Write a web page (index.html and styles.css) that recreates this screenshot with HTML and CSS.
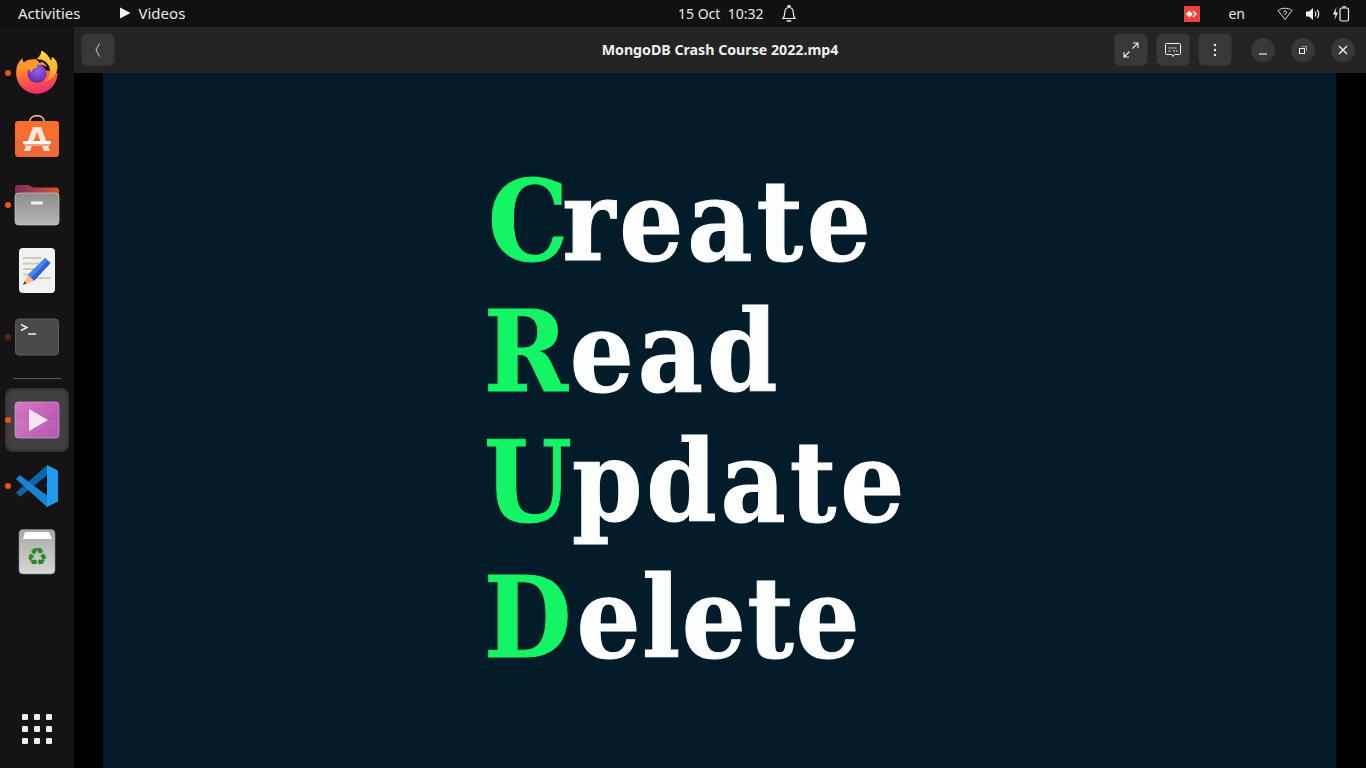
FILE: index.html
```html
<!DOCTYPE html>
<html lang="en">
<head>
    <meta charset="UTF-8">
    <meta name="viewport" content="width=device-width, initial-scale=1.0">
    <title>MongoDB Crash Course 2022.mp4</title>
    <link rel="stylesheet" href="styles.css">
</head>
<body>
    <header class="topbar">
        <div class="topbar-left">
            <span class="activities">Activities</span>
            <span class="app-menu">
                <svg class="app-menu-icon" viewBox="0 0 12 12"><path d="M1 0.5L11.5 6L1 11.5Z" fill="#f4f4f4"/></svg>
                Videos
            </span>
        </div>
        <div class="clock">
            <span>15 Oct&nbsp; 10:32</span>
            <svg class="bell" viewBox="0 0 16 18" fill="none" stroke="#eee" stroke-width="1.2">
                <path d="M2 13.5c1.5-1.5 1.6-3 1.7-5.5C3.8 4.5 5.5 2.5 8 2.5s4.200 2 4.300 5.500c.1 2.500.2 4 1.700 5.500Z"/>
                <path d="M7 2V1h2v1M5.800 16h4.400" stroke-width="1.500"/>
            </svg>
        </div>
        <div class="tray">
            <span class="tray-badge">
                <svg viewBox="0 0 16 16" width="12" height="12"><path d="M4.500 3.500L9 8l-4.500 4.500L0 8Z" fill="#fff"/><path d="M10 3.500L14.500 8 10 12.500 8.800 11.300 12 8 8.800 4.700Z" fill="#fff"/></svg>
            </span>
            <span class="lang">en</span>
            <svg class="wifi" viewBox="0 0 16 14" fill="none" stroke="#ddd" stroke-width="1"><path d="M1 3.500C5 .5 11 .5 15 3.500L8 12.500Z"/><path d="M6.500 5.500c0-2 3-2 3-.2 0 1.200-1.500 1.200-1.500 2.700" stroke="#fff"/></svg>
            <svg class="volume" viewBox="0 0 16 14"><path d="M1 4.500h3L8 1v12L4 9.500H1Z" fill="#f2f2f2"/><path d="M10 4.500c1 1.500 1 3.500 0 5M12.200 2.800c1.800 2.500 1.800 6 0 8.400" fill="none" stroke="#eee" stroke-width="1.200"/></svg>
            <svg class="battery" viewBox="0 0 18 16" fill="none"><path d="M4.500 1L1 8.500h2.500L2.500 14 6 6.500H3.500Z" fill="#f2f2f2"/><rect x="8" y="2" width="8.500" height="13" rx="1.800" stroke="#f2f2f2" stroke-width="1.200"/><path d="M10.500 .8h3.500" stroke="#f2f2f2" stroke-width="1.200"/></svg>
        </div>
    </header>

    <div class="desktop">
        <nav class="dock">
            <div class="dock-item">
                <i class="run-dot"></i>
                <svg class="dock-icon" viewBox="0 0 44 44">
                    <defs>
                        <linearGradient id="ffBody" x1="0.3" y1="0.2" x2="0.5" y2="1">
                            <stop offset="0" stop-color="#ff9a26"/>
                            <stop offset="0.5" stop-color="#ff5a3c"/>
                            <stop offset="1" stop-color="#f02a78"/>
                        </linearGradient>
                        <linearGradient id="ffFlame" x1="0.5" y1="0" x2="0.5" y2="1">
                            <stop offset="0" stop-color="#ffdc3c"/>
                            <stop offset="1" stop-color="#ff9628"/>
                        </linearGradient>
                        <radialGradient id="ffGlobe" cx="0.55" cy="0.35" r="0.65">
                            <stop offset="0" stop-color="#9a5cf0"/>
                            <stop offset="1" stop-color="#5a2eb0"/>
                        </radialGradient>
                    </defs>
                    <path d="M1.200 23c0-6 1.800-11 6.300-15 0 2 .4 3.500 1.500 5 1.500-2 3.500-3.200 6-3.500 1.800-.2 4-.2 5.500-.5l1.500 1 8 10L42.500 23c0 11.500-9.300 20.800-20.700 20.800S1.200 34.500 1.200 23Z" fill="url(#ffBody)"/>
                    <path d="M26.500 .5c-.5 3.500-1.500 6-5 8.800 6-.5 11 2.500 13 8 1.500 5-.5 11-5 14.500 8-2 13-8 13-15 0-4-1.500-7.500-5.800-10.100.3 1.800 0 3-.7 4C34.500 6.500 31 3 26.500 .5Z" fill="url(#ffFlame)"/>
                    <circle cx="22" cy="23.500" r="9.500" fill="url(#ffGlobe)"/>
                    <path d="M6 14c3-2.500 6.500-3 10-1.500 3.500 1.500 8 1 11-.5 2 1 4 2.500 5 5-3-2-7-3-10-2 .5 1 .5 1.800 0 2.500-3 .5-5 2.500-6 5-1.500-3-5-6-10-8.500Z" fill="#ff9a2a"/>
                </svg>
            </div>
            <div class="dock-item">
                <svg class="dock-icon" viewBox="0 0 44 44" fill="none">
                    <path d="M15 8V5c0-7 14-7 14 0v3" stroke="#f3d3ae" stroke-width="1.500"/>
                    <rect y="5" width="44" height="36" rx="3.500" fill="#ec6a35"/>
                    <path d="M0 8.500C0 6.500 1.500 5 3.500 5h37C42.500 5 44 6.500 44 8.500V23H0Z" fill="#f6702e"/>
                    <path fill-rule="evenodd" d="M18 11h8l9 24h-6l-7-19-7 19H9Z" fill="#fbe4d8"/>
                    <rect x="8" y="25" width="28" height="3" rx="1" fill="#fff"/>
                    <rect x="9" y="28" width="26" height="2" fill="#f6a27c"/>
                </svg>
            </div>
            <div class="dock-item">
                <i class="run-dot"></i>
                <svg class="dock-icon" viewBox="0 0 44 44">
                    <defs>
                        <linearGradient id="folderBack" x1="0" y1="0" x2="1" y2="0">
                            <stop offset="0" stop-color="#7c2a63"/>
                            <stop offset="1" stop-color="#d8562a"/>
                        </linearGradient>
                        <linearGradient id="folderFront" x1="0" y1="0" x2="0" y2="1">
                            <stop offset="0" stop-color="#8d8d8d"/>
                            <stop offset="1" stop-color="#b5b5b5"/>
                        </linearGradient>
                    </defs>
                    <path d="M0 6c0-2 1-3 3-3h11l4 2.500h23c2 0 3 1 3 3V16H0Z" fill="url(#folderBack)"/>
                    <rect y="11" width="44" height="32" rx="3.500" fill="url(#folderFront)" stroke="#c8c8c8" stroke-width=".7"/>
                    <rect x="16" y="19.500" width="12" height="3" rx="1" fill="#f2f2f2"/>
                </svg>
            </div>
            <div class="dock-item">
                <svg class="dock-icon" viewBox="0 0 44 44">
                    <rect x="4" y="0" width="36" height="45" rx="4" fill="#f1f1f1"/>
                    <path d="M8 10h18M8 15.500h16M8 21h14M8 26.500h8M20 30h16" stroke="#cfcbbb" stroke-width="2"/>
                    <path d="M30 10l5.700 5L19 33l-6-6Z" fill="#2f62d8"/>
                    <path d="M30 10l2.800 2.500L16 30l-3-3Z" fill="#4a86ee"/>
                    <path d="M13 27l6 6-11 4Z" fill="#f6bd85"/>
                    <path d="M9.500 33l-1.500 4 3.500-1.500Z" fill="#444"/>
                </svg>
            </div>
            <div class="dock-item">
                <i class="run-dot run-dot-dim"></i>
                <svg class="dock-icon" viewBox="0 0 44 44" fill="none">
                    <rect x=".5" y="5" width="43" height="36" rx="3.500" fill="#4a4a4a" stroke="#5c5c5c"/>
                    <path d="M6 10.500l6 3-6 3" stroke="#f0f0f0" stroke-width="1.400"/>
                    <path d="M13 20h8" stroke="#f0f0f0" stroke-width="1.500"/>
                </svg>
            </div>
            <div class="dock-sep"></div>
            <div class="dock-item dock-item-active">
                <i class="run-dot"></i>
                <svg class="dock-icon" viewBox="0 0 44 44">
                    <defs>
                        <linearGradient id="videoTile" x1="0" y1="0" x2="1" y2="1">
                            <stop offset="0" stop-color="#d47cc4"/>
                            <stop offset="1" stop-color="#b048ac"/>
                        </linearGradient>
                    </defs>
                    <rect y="4" width="44" height="36" rx="3.500" fill="url(#videoTile)" stroke="#e4a8dc" stroke-width=".6"/>
                    <path d="M0 22h44v14.500c0 2-1.500 3.500-3.500 3.500h-37C1.500 40 0 38.500 0 36.500Z" fill="#fff" opacity=".07"/>
                    <path d="M14 11l19 11-19 11Z" fill="#f6e4f2"/>
                </svg>
            </div>
            <div class="dock-item">
                <i class="run-dot"></i>
                <svg class="dock-icon" viewBox="0 0 44 44">
                    <path d="M1 28.500L4.800 32.700 32 11.500V1.200Z" fill="#0a65a9"/>
                    <path d="M1 15L4.800 11 32 31.500V43Z" fill="#1a83cf"/>
                    <path d="M32 1l10 5c.6.400 1 1 1 1.800v28.400c0 .8-.4 1.400-1 1.800L32 43Z" fill="#1f9cf0"/>
                </svg>
            </div>
            <div class="dock-item">
                <svg class="dock-icon" viewBox="0 0 44 44">
                    <defs>
                        <linearGradient id="trashBody" x1="0" y1="0" x2="0" y2="1">
                            <stop offset="0" stop-color="#a8a8a8"/>
                            <stop offset="1" stop-color="#d6d6d6"/>
                        </linearGradient>
                    </defs>
                    <rect x="4" y="-.5" width="36" height="44.500" rx="4" fill="url(#trashBody)" stroke="#8a8a8a" stroke-width=".6"/>
                    <path d="M8 9l2-7h24l3 7Z" fill="#fff"/>
                    <text class="recycle" x="22" y="35" text-anchor="middle">♻</text>
                </svg>
            </div>
            <div class="dock-grid">
                <i></i><i></i><i></i><i></i><i></i><i></i><i></i><i></i><i></i>
            </div>
        </nav>

        <main class="window">
            <div class="headerbar">
                <button class="btn">
                    <svg width="16" height="16" viewBox="0 0 16 16" fill="none" stroke="#c8c8c8"><path d="M9.500 1.500L6 8l3.500 6.500"/></svg>
                </button>
                <h1 class="window-title">MongoDB Crash Course 2022.mp4</h1>
                <div class="header-tools">
                    <button class="btn">
                        <svg width="16" height="16" viewBox="0 0 16 16" fill="none" stroke="#eee" stroke-width="1.100"><path d="M9.500 6.500L15 1M10 1h5v5M6.500 9.500L1 15M1 10v5h5"/></svg>
                    </button>
                    <button class="btn">
                        <svg width="18" height="18" viewBox="0 0 18 18" fill="none" stroke="#eee"><path d="M2.500 2.500h13a1 1 0 0 1 1 1v9a1 1 0 0 1-1 1h-5L9 15.500 8 13.500H2.500a1 1 0 0 1-1-1v-9a1 1 0 0 1 1-1Z"/><path d="M4.500 7h9M4.500 10h3M9 10h4.500" stroke-dasharray="2 1"/></svg>
                    </button>
                    <button class="btn">
                        <svg width="16" height="16" viewBox="0 0 16 16" fill="#eee"><circle cx="8" cy="3" r="1.200"/><circle cx="8" cy="8" r="1.200"/><circle cx="8" cy="13" r="1.200"/></svg>
                    </button>
                </div>
                <div class="window-controls">
                    <button class="win-btn">
                        <svg width="12" height="12" viewBox="0 0 12 12" stroke="#eee" stroke-width="1.200"><path d="M2 10h8"/></svg>
                    </button>
                    <button class="win-btn">
                        <svg width="12" height="12" viewBox="0 0 12 12" fill="none" stroke="#eee"><rect x="2.500" y="4.500" width="5" height="5"/><path d="M5 2.500h4.500V7" stroke="#999"/></svg>
                    </button>
                    <button class="win-btn">
                        <svg width="12" height="12" viewBox="0 0 12 12" stroke="#eee" stroke-width="1.400"><path d="M2 2l8 8M10 2l-8 8"/></svg>
                    </button>
                </div>
            </div>
            <div class="player">
                <section class="slide">
                    <p class="slide-line line-create"><span class="slide-cap">C</span>reate</p>
                    <p class="slide-line line-read"><span class="slide-cap">R</span>ead</p>
                    <p class="slide-line line-update"><span class="slide-cap">U</span>pdate</p>
                    <p class="slide-line line-delete"><span class="slide-cap">D</span>elete</p>
                </section>
            </div>
        </main>
    </div>
</body>
</html>
```

FILE: styles.css
```css
* {
    box-sizing: border-box;
}
html, body {
    height: 100%;
}
body {
    margin: 0;
    display: flex;
    flex-direction: column;
    height: 768px;
    overflow: hidden;
    background-color: #111;
    color: #eee;
    font-family: "Noto Sans", sans-serif;
}

/* top bar */
.topbar {
    height: 27px;
    flex: none;
    display: grid;
    grid-template-columns: 678px auto 1fr;
    align-items: center;
    background-color: #111;
    font-size: 14px;
    color: #e8e8e8;
}
.topbar-left {
    display: flex;
    align-items: center;
    padding: 0 0 1px 18px;
    gap: 38px;
    font-size: 15px;
}
.app-menu {
    display: flex;
    align-items: center;
    gap: 8px;
}
.app-menu-icon {
    width: 12px;
    height: 12px;
}
.clock {
    display: flex;
    align-items: center;
    gap: 18px;
    font-size: 14px;
}
.bell {
    width: 16px;
    height: 18px;
}
.tray {
    display: flex;
    align-items: center;
    justify-content: flex-end;
    padding-right: 16px;
}
.tray-badge {
    width: 16px;
    height: 16px;
    display: flex;
    align-items: center;
    justify-content: center;
    background-color: #f0413c;
    margin-right: 28px;
}
.lang {
    margin-right: 32px;
    font-size: 14px;
}
.wifi {
    width: 16px;
    height: 14px;
    margin-right: 12px;
}
.volume {
    width: 16px;
    height: 14px;
    margin-right: 11px;
}
.battery {
    width: 18px;
    height: 16px;
}

/* dock */
.desktop {
    flex: 1;
    display: flex;
    min-height: 0;
}
.dock {
    width: 74px;
    flex: none;
    display: flex;
    flex-direction: column;
    align-items: center;
    padding: 12px 0 6px;
    background-color: #151314;
}
.dock-item {
    position: relative;
    width: 64px;
    height: 66px;
    flex: none;
    display: flex;
    align-items: center;
    justify-content: center;
}
.dock-item-active {
    height: 64px;
    margin: 1px 0;
    border-radius: 8px;
    background-color: #414141;
    box-shadow: inset 0 0 5px #242223;
}
.dock-icon {
    width: 44px;
    height: 44px;
    overflow: visible;
}
.run-dot {
    position: absolute;
    left: 0;
    top: 31px;
    width: 6px;
    height: 6px;
    border-radius: 50%;
    background-color: #e95420;
}
.dock-item-active .run-dot {
    top: 29px;
}
.dock-item-active + .dock-item .run-dot {
    top: 30px;
}
.run-dot-dim {
    background-color: #5a2a18;
}
.dock-sep {
    width: 48px;
    height: 1px;
    flex: none;
    margin: 9px 0 8px;
    background-color: #5e5d5d;
}
.recycle {
    font-family: "DejaVu Sans", sans-serif;
    font-size: 24px;
    fill: #2a8a20;
}
.dock-grid {
    margin-top: auto;
    margin-bottom: 18px;
    display: grid;
    grid-template-columns: repeat(3, 6px);
    gap: 6px;
}
.dock-grid i {
    display: block;
    width: 6px;
    height: 6px;
    border-radius: 1px;
    background-color: #eee;
}

/* video window */
.window {
    flex: 1;
    display: flex;
    flex-direction: column;
    min-width: 0;
}
.headerbar {
    position: relative;
    height: 46px;
    flex: none;
    display: flex;
    align-items: center;
    padding: 0 11px 1px 7px;
    background-color: #242424;
}
.window-title {
    position: absolute;
    left: 0;
    right: 0;
    top: 13px;
    margin: 0;
    text-align: center;
    font-size: 14.2px;
    font-weight: 700;
    color: #f0f0f0;
    pointer-events: none;
}
.btn {
    width: 34px;
    height: 33px;
    display: flex;
    align-items: center;
    justify-content: center;
    padding: 0;
    border: 1px solid #2e2e2e;
    border-radius: 6px;
    background-color: #383838;
}
.header-tools {
    display: flex;
    gap: 8px;
    margin-left: auto;
}
.window-controls {
    display: flex;
    gap: 16px;
    margin-left: 19px;
}
.win-btn {
    width: 24px;
    height: 24px;
    display: flex;
    align-items: center;
    justify-content: center;
    padding: 0;
    border: 0;
    border-radius: 50%;
    background-color: #383838;
}
.player {
    flex: 1;
    padding: 0 30px 0 29px;
    background-color: #000;
    min-height: 0;
}

/* slide text, spacing tuned per word to follow the video frame */
.slide {
    height: 100%;
    padding: 82px 0 0 381px;
    background-color: #031c29;
    font-family: "DejaVu Serif Condensed", "DejaVu Serif", serif;
    font-stretch: condensed;
    font-weight: 700;
    font-size: 112px;
    color: #fcfdfd;
    -webkit-text-stroke: 1px currentColor;
}
.slide-line {
    margin: 0;
    line-height: 132px;
    letter-spacing: 3.9px;
}
.slide-cap {
    color: #14f565;
}
.line-create {
    height: 131px;
}
.line-create .slide-cap {
    margin-left: 4px;
    letter-spacing: -6px;
}
.line-read {
    height: 130px;
}
.line-read .slide-cap {
    letter-spacing: 2px;
}
.line-update {
    height: 136px;
}
.line-update .slide-cap {
    letter-spacing: 0;
}
.line-delete {
    letter-spacing: 1.5px;
}
.line-delete .slide-cap {
    letter-spacing: 5px;
}
```
